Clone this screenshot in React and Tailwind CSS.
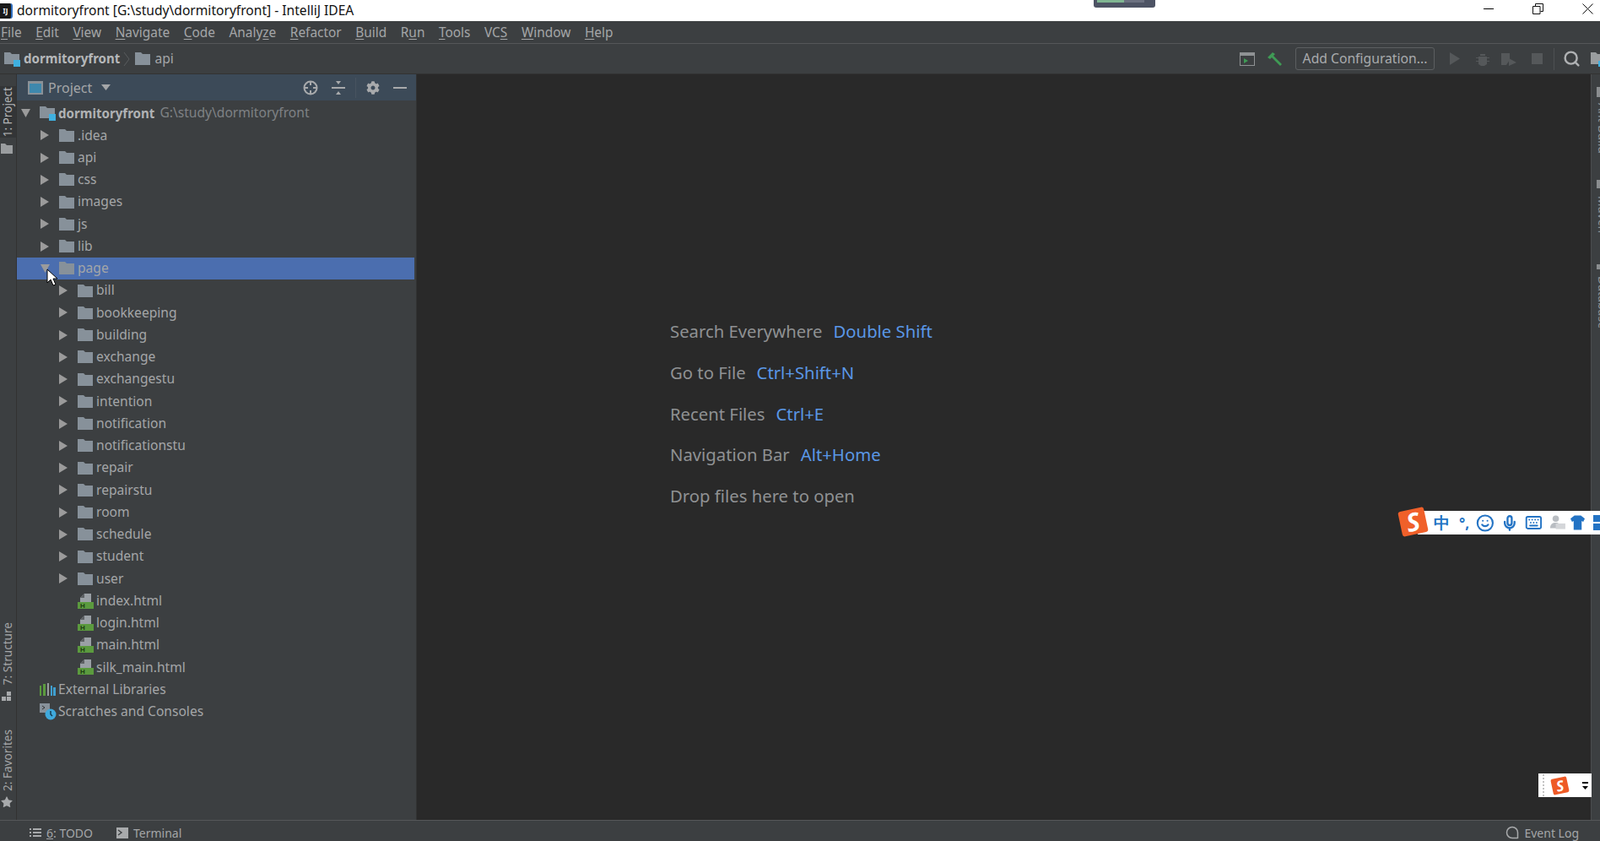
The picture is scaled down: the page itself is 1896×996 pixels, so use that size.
import { Search, Smile, Mic, Keyboard, Star } from 'lucide-react'
import { FaCog } from 'react-icons/fa'

const menus = [
  ['', 'F', 'ile'],
  ['', 'E', 'dit'],
  ['', 'V', 'iew'],
  ['', 'N', 'avigate'],
  ['', 'C', 'ode'],
  ['Analy', 'z', 'e'],
  ['', 'R', 'efactor'],
  ['', 'B', 'uild'],
  ['R', 'u', 'n'],
  ['', 'T', 'ools'],
  ['VC', 'S', ''],
  ['', 'W', 'indow'],
  ['', 'H', 'elp']
]

const topFolders = ['.idea', 'api', 'css', 'images', 'js', 'lib']
const pageFolders = [
  'bill',
  'bookkeeping',
  'building',
  'exchange',
  'exchangestu',
  'intention',
  'notification',
  'notificationstu',
  'repair',
  'repairstu',
  'room',
  'schedule',
  'student',
  'user'
]
const htmlFiles = ['index.html', 'login.html', 'main.html', 'silk_main.html']

const hints = [
  ['Search Everywhere', 'Double Shift'],
  ['Go to File', 'Ctrl+Shift+N'],
  ['Recent Files', 'Ctrl+E'],
  ['Navigation Bar', 'Alt+Home'],
  ['Drop files here to open', '']
]

function Folder() {
  return (
    <svg width="18" height="15" viewBox="0 0 18 15" className="shrink-0">
      <path d="M0 0h7l2 2h9v13H0z" fill="#87919a" />
    </svg>
  )
}

function ModuleFolder() {
  return (
    <svg width="20" height="18" viewBox="0 0 20 18" className="shrink-0">
      <path d="M0 1h7l2 2h9v12H0z" fill="#87919a" />
      <rect x="11" y="10" width="8" height="8" fill="#3fb0e0" />
    </svg>
  )
}

function HtmlIcon() {
  return (
    <svg width="20" height="20" viewBox="0 0 20 20" className="shrink-0">
      <path d="M3 11V6l5-5h8v10z" fill="#9aa0a5" />
      <path d="M3 6h5V1z" fill="#5c6063" />
      <rect x="0" y="11" width="19" height="8" fill="#5b9a3e" />
      <text x="3" y="18" fontSize="8" fontWeight="700" fill="#1d3d12" fontFamily="Liberation Sans">H</text>
    </svg>
  )
}

function Arrow({ open }) {
  return (
    <svg width="11" height="12" viewBox="0 0 11 12" className="shrink-0">
      {open ? <path d="M0 1h11L5.5 11z" fill="#9b9b9b" /> : <path d="M0 0l10 6-10 6z" fill="#9b9b9b" />}
    </svg>
  )
}

function Row({ children, className = '' }) {
  return <div className={`flex h-[26.25px] items-center ${className}`}>{children}</div>
}

function FolderRow({ name, nested, open, selected }) {
  return (
    <Row className={`${nested ? 'pl-[50px]' : 'pl-[28px]'} ${selected ? 'w-[471px] bg-[#4b6eaf]' : ''}`}>
      <Arrow open={open} />
      <span className="ml-[11px]">
        <Folder />
      </span>
      <span className="ml-[4px]">{name}</span>
    </Row>
  )
}

function ToolLabel({ children, reverse }) {
  return (
    <span className={`block [writing-mode:vertical-rl] whitespace-nowrap leading-none ${reverse ? 'rotate-180' : ''}`}>
      {children}
    </span>
  )
}

export default function App() {
  return (
    <div className="relative flex h-[996px] w-[1896px] flex-col overflow-hidden bg-[#3c3f41] font-['Noto_Sans',sans-serif] text-[15.6px] text-[#a4a6a8]">
      {/* title bar */}
      <div className="flex h-[25px] shrink-0 items-center bg-white text-[#111]">
        <div className="flex h-[18px] w-[15px] items-center justify-center rounded-r-[3px] border-r-2 border-[#2f6fc0] bg-[#1a1a1a] text-[8px] font-bold leading-none text-white">
          IJ
        </div>
        <span className="ml-[5px] whitespace-nowrap text-[15.6px]">
          dormitoryfront [G:\study\dormitoryfront] - IntelliJ IDEA
        </span>
        <div className="ml-auto flex items-center pb-[4px]">
          <div className="h-px w-[12px] bg-black" />
          <svg width="13" height="13" viewBox="0 0 13 13" className="ml-[46px]" fill="none" stroke="#111">
            <path d="M.5 3.5h8.5v9H.5zM3.5 3V.5h9v9H9.5" />
          </svg>
          <svg width="13" height="13" viewBox="0 0 13 13" className="ml-[46px] mr-[8px]" stroke="#111">
            <path d="M.5.5l12 12M12.5.5l-12 12" />
          </svg>
        </div>
      </div>

      {/* menu */}
      <div className="flex h-[27px] shrink-0 items-center gap-[16.6px] border-b border-[#555759] pl-[1px] pt-[1px] text-[15.4px]">
        {menus.map(([before, key, after]) => (
          <span key={key + after} className="whitespace-nowrap">
            {before}
            <span className="underline underline-offset-2">{key}</span>
            {after}
          </span>
        ))}
      </div>

      {/* navigation bar */}
      <div className="flex h-[36px] shrink-0 items-center border-b border-[#323232] pl-[5px]">
        <ModuleFolder />
        <span className="ml-[3px] text-[15.1px] font-bold text-[#b5b7b9]">dormitoryfront</span>
        <svg width="8" height="18" viewBox="0 0 8 18" className="ml-[4px]" fill="none" stroke="#5a5d5f">
          <path d="M1 1l6 8-6 8" />
        </svg>
        <span className="ml-[6px]">
          <Folder />
        </span>
        <span className="ml-[5px]">api</span>
        <div className="ml-auto flex items-center">
          <svg width="18" height="16" viewBox="0 0 18 16" fill="none">
            <rect x=".5" y=".5" width="17" height="15" stroke="#8f9294" />
            <rect x="1" y="1" width="16" height="3" fill="#8f9294" />
            <path d="M5 7l5 3-5 3z" fill="#3f9b55" />
          </svg>
          <svg width="19" height="18" viewBox="0 0 19 18" className="ml-[14px]">
            <path d="M1 7l6-6 3 2-2 2 10 10-2 2L6 7 4 9z" fill="#3f9b55" />
          </svg>
          <div className="ml-[15px] flex h-[27px] w-[165px] items-center justify-center rounded-[3px] border border-[#5c5f61] text-[15.7px] text-[#a9abad]">
            Add Configuration...
          </div>
          <svg width="12" height="15" viewBox="0 0 12 15" className="ml-[18px]">
            <path d="M0 0l12 7.5L0 15z" fill="#55585a" />
          </svg>
          <svg width="16" height="16" viewBox="0 0 16 16" className="ml-[19px]">
            <path d="M5 2h6v2H5zM3 5h10v9l-3 2H6l-3-2zM0 6h3v1H0zM13 6h3v1h-3zM0 10h3v1H0zM13 10h3v1h-3z" fill="#55585a" />
          </svg>
          <svg width="18" height="16" viewBox="0 0 18 16" className="ml-[14px]">
            <path d="M0 1h10v8l-4 6H0z" fill="#55585a" />
            <path d="M9 7l9 5-9 4z" fill="#55585a" />
          </svg>
          <div className="ml-[18px] h-[13px] w-[13px] bg-[#55585a]" />
          <div className="ml-[13px] h-[26px] w-px bg-[#4e5052]" />
          <Search size={21} strokeWidth={2.8} className="ml-[10px] text-[#afb1b3]" />
          <svg width="18" height="18" viewBox="0 0 18 18" className="ml-[12px] -mr-[7px]">
            <path d="M0 1h6l2 2h8v12H0z" fill="#9a9d9f" />
            <rect x="9" y="11" width="7" height="7" fill="#3fb0e0" />
          </svg>
        </div>
      </div>

      <div className="flex min-h-0 flex-1">
        {/* left tool strip */}
        <div className="flex w-[20px] shrink-0 flex-col justify-between border-r border-[#323232] pb-[13px] pt-[14px] text-[13.6px]">
          <div className="flex w-[18px] flex-col items-center gap-[7px]">
            <div className="flex w-[19px] justify-center bg-[#333537] py-[1px] text-[#b4b6b8]">
              <ToolLabel reverse>1: Project</ToolLabel>
            </div>
            <svg width="14" height="12" viewBox="0 0 14 12" className="-ml-[3px]">
              <path d="M0 0h5l2 2h7v10H0z" fill="#9a9d9f" />
            </svg>
          </div>
          <div className="flex w-[18px] flex-col items-center">
            <ToolLabel reverse>7: Structure</ToolLabel>
            <svg width="12" height="11" viewBox="0 0 12 11" className="mt-[8px] -ml-[3px]">
              <path d="M6 0h5v5H6zM0 6h5v5H0zM6 6h5v5H6z" fill="#a8aaac" />
            </svg>
            <div className="mt-[34px]">
              <ToolLabel reverse>2: Favorites</ToolLabel>
            </div>
            <Star size={16} fill="#a8aaac" strokeWidth={0} className="mt-[5px] -ml-[3px]" />
          </div>
        </div>

        {/* project panel */}
        <div className="w-[474px] shrink-0 border-r border-[#323232]">
          <div className="flex h-[31px] items-center bg-[#3c4a58] pl-[13px]">
            <svg width="18" height="16" viewBox="0 0 18 16">
              <rect width="18" height="16" fill="#8a9197" />
              <rect x="2" y="3" width="14" height="11" fill="#3e88ad" />
            </svg>
            <span className="ml-[6px] pt-[1px] text-[16px]">Project</span>
            <svg width="11" height="7" viewBox="0 0 11 7" className="ml-[11px]">
              <path d="M0 0h11L5.5 7z" fill="#a4a6a8" />
            </svg>
            <svg width="18" height="18" viewBox="0 0 18 18" fill="none" stroke="#a8aaac" strokeWidth="2" className="ml-[228px]">
              <circle cx="9" cy="9" r="7.5" />
              <path d="M9 2v4M9 12v4M2 9h4M12 9h4" />
            </svg>
            <svg width="16" height="16" viewBox="0 0 16 16" className="ml-[16px]">
              <path d="M0 7h16v2H0zM5 0h6L8 4zM8 12l3 4H5z" fill="#a8aaac" />
            </svg>
            <div className="ml-[12px] h-[24px] w-px bg-[#47535f]" />
            <FaCog size={16} className="ml-[12px] text-[#a8aaac]" />
            <div className="ml-[16px] h-[2px] w-[16px] bg-[#a8aaac]" />
          </div>

          <div className="pt-[2px]">
            <Row className="pl-[5px]">
              <Arrow open />
              <span className="ml-[11px]">
                <ModuleFolder />
              </span>
              <span className="ml-[2px] text-[15.1px] font-bold text-[#b0b2b4]">dormitoryfront</span>
              <span className="ml-[6px] text-[#7f8285]">G:\study\dormitoryfront</span>
            </Row>
            {topFolders.map((name) => (
              <FolderRow key={name} name={name} />
            ))}
            <FolderRow name="page" open selected />
            {pageFolders.map((name) => (
              <FolderRow key={name} name={name} nested />
            ))}
            {htmlFiles.map((name) => (
              <Row key={name} className="pl-[72px]">
                <HtmlIcon />
                <span className="ml-[2px]">{name}</span>
              </Row>
            ))}
            <Row className="pl-[27px]">
              <svg width="19" height="15" viewBox="0 0 19 15">
                <path d="M0 3h2v12H0zM4 1h3v14H4z" fill="#5b9a3e" />
                <path d="M9 0h2v15H9z" fill="#9a9d9f" />
                <path d="M13 3h2v12h-2zM16 5h3v10h-3z" fill="#3f9fd0" />
              </svg>
              <span className="ml-[3px]">External Libraries</span>
            </Row>
            <Row className="pl-[27px]">
              <svg width="20" height="20" viewBox="0 0 20 20">
                <rect x="0" y="0" width="12" height="11" fill="#87919a" />
                <path d="M3 3l3 2-3 2" fill="none" stroke="#333" />
                <circle cx="13" cy="13" r="6.5" fill="#3fa9dc" />
                <path d="M13 9v4l2 2" fill="none" stroke="#12354a" strokeWidth="1.4" />
              </svg>
              <span className="ml-[2px]">Scratches and Consoles</span>
            </Row>
          </div>
        </div>

        {/* editor */}
        <div className="flex-1 bg-[#292929] pl-[300px] pt-[280px] text-[20.3px] text-[#8f9193]">
          {hints.map(([label, keys]) => (
            <div key={label} className="flex h-[48.75px] items-center">
              <span>{label}</span>
              {keys && <span className="ml-[13px] text-[#5a97e6]">{keys}</span>}
            </div>
          ))}
        </div>

        {/* right tool strip, labels run off the window edge */}
        <div className="flex w-[11px] shrink-0 flex-col overflow-hidden border-l border-[#4a4c4e] pl-[6px] pt-[15px] text-[14px] text-[#8f9193]">
          <div className="h-[12px] w-[6px] shrink-0 bg-[#8a8d8f]" />
          <div className="mt-[7px] h-[60px] shrink-0">
            <ToolLabel>Ant Build</ToolLabel>
          </div>
          <div className="mt-[31px] h-[10px] w-[6px] shrink-0 bg-[#8a8d8f]" />
          <div className="mt-[9px] h-[40px] shrink-0">
            <ToolLabel>Maven</ToolLabel>
          </div>
          <div className="mt-[41px] h-[6px] w-[6px] shrink-0 bg-[#8a8d8f]" />
          <div className="mt-[8px] shrink-0">
            <ToolLabel>Database</ToolLabel>
          </div>
        </div>
      </div>

      {/* status bar */}
      <div className="flex h-[25px] shrink-0 items-center border-t border-[#555759] pl-[35px] pt-[4px] text-[14px]">
        <svg width="14" height="11" viewBox="0 0 14 11">
          <path d="M0 0h2v2H0zM4 0h10v2H4zM0 4h2v2H0zM4 4h10v2H4zM0 8h2v2H0zM4 8h10v2H4z" fill="#a8aaac" />
        </svg>
        <span className="ml-[6px]">
          <span className="underline">6</span>: TODO
        </span>
        <svg width="14" height="13" viewBox="0 0 14 13" className="ml-[28px]">
          <rect width="14" height="13" fill="#a8aaac" />
          <path d="M2 3l4 3-4 3" fill="none" stroke="#3c3f41" strokeWidth="1.4" />
        </svg>
        <span className="ml-[6px]">Terminal</span>
        <svg width="16" height="16" viewBox="0 0 16 16" fill="none" stroke="#a8aaac" strokeWidth="1.5" className="ml-auto">
          <path d="M14.5 15V8A6.5 6.5 0 1 0 8 14.5h6.5" />
        </svg>
        <span className="ml-[6px] mr-[25px]">Event Log</span>
      </div>

      {/* floating bits over the window */}
      <div className="absolute left-[1296px] top-0 flex h-[9px] w-[73px] items-start rounded-b-[3px] bg-[#4d5364] px-[4px]">
        <div className="h-[3px] w-[32px] bg-[#7fb592]" />
        <div className="h-[3px] w-[24px] bg-[#6b7080]" />
      </div>

      <svg width="13" height="21" viewBox="0 0 13 21" className="absolute left-[55px] top-[318px]">
        <path d="M1 1v16l4-4 3 7 3-1-3-7h5z" fill="#fff" stroke="#000" />
      </svg>

      <div className="absolute left-[1680px] top-[605px] flex h-[28px] w-[216px] items-center bg-white font-['Noto_Sans_CJK_SC',sans-serif] text-[#2373c4]">
        <span className="ml-[19px] text-[19px] font-bold leading-none">中</span>
        <span className="ml-[11px] text-[17px] font-bold leading-none">°,</span>
        <Smile size={23} strokeWidth={2.3} className="ml-[8px]" />
        <Mic size={21} strokeWidth={2.8} className="ml-[8px]" />
        <Keyboard size={22} strokeWidth={2.2} className="ml-[8px]" />
        <svg width="20" height="18" viewBox="0 0 20 18" className="ml-[9px]">
          <circle cx="8" cy="4" r="4" fill="#b9bdc2" />
          <path d="M1 16c0-5 3-7 7-7s5 2 5 7z" fill="#b9bdc2" />
          <rect x="8" y="10" width="12" height="7" fill="#d4d6d9" />
        </svg>
        <svg width="18" height="18" viewBox="0 0 18 18" className="ml-[6px]">
          <path d="M5 0h8l5 4-2 4-2-1v11H4V7L2 8 0 4z" fill="#2373c4" />
        </svg>
        <div className="ml-[10px] grid grid-cols-1 gap-[2px]">
          <div className="h-[8px] w-[8px] bg-[#2373c4]" />
          <div className="h-[8px] w-[8px] bg-[#2373c4]" />
        </div>
      </div>
      <div className="absolute left-[1659px] top-[603px] flex h-[30px] w-[31px] -rotate-12 items-center justify-center rounded-[3px] bg-[#f0602a] font-['Liberation_Sans',sans-serif] text-[30px] font-bold italic leading-none text-white">
        S
      </div>

      <div className="absolute left-[1823px] top-[916px] flex h-[28px] w-[63px] items-center bg-white">
        <div className="ml-[5px] h-[26px] border-l-2 border-dotted border-[#c4c4c4]" />
        <div className="ml-[9px] flex h-[19px] w-[19px] -rotate-12 items-center justify-center rounded-[2px] bg-[#ee5a26] font-['Liberation_Sans',sans-serif] text-[17px] font-bold italic leading-none text-white">
          S
        </div>
        <div className="ml-[17px] flex flex-col items-center gap-[3px]">
          <div className="h-[2px] w-[7px] bg-black" />
          <svg width="7" height="4" viewBox="0 0 7 4">
            <path d="M0 0h7L3.5 4z" fill="#000" />
          </svg>
        </div>
      </div>
    </div>
  )
}
